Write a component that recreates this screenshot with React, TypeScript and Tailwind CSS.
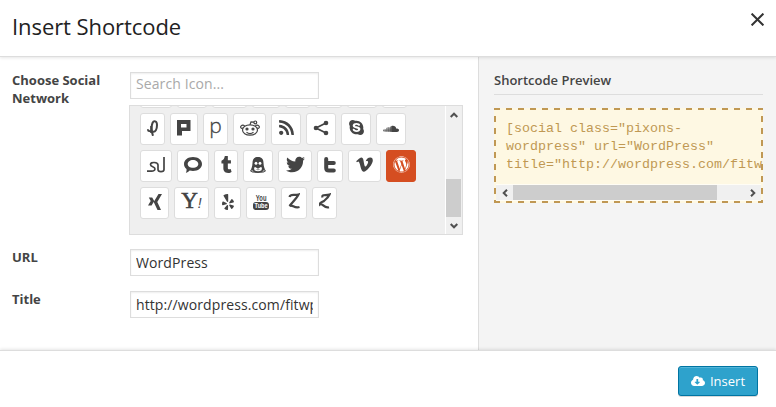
import React from 'react';
import {
  FaRss, FaSkype, FaSoundcloud, FaTumblr, FaTwitter, FaVimeoV,
  FaWordpress, FaYelp, FaCloudDownloadAlt,
} from 'react-icons/fa';

type TileDef = { w: string; icon: React.ReactNode; active?: boolean };

const stroke = { fill: 'none', stroke: 'currentColor' } as const;

const Path = () => (
  <svg width="12" height="16" viewBox="0 0 12 16" {...stroke} strokeWidth="2">
    <path d="M6 15.800C4.500 12 4.200 6 5.500 3C6.800 .2 10 .8 10 5C10 9.500 8.500 12.300 5.500 11.500C3.500 11 .6 12 1.200 9.200" />
    <path d="M4.200 6V13" />
  </svg>
);
const Plurk = () => (
  <svg width="14" height="16" viewBox="0 0 14 16" fill="currentColor">
    <path d="M0 0H13.500V11H9.500V11H5V15.500H0ZM4 4V7.500H9.500V4Z" fillRule="evenodd" />
  </svg>
);
const Reddit = () => (
  <svg width="20" height="16" viewBox="0 0 20 16" {...stroke} strokeWidth="1.2">
    <ellipse cx="10" cy="10" rx="7.5" ry="5.2" />
    <path d="M3 8C1 9 0 7 1.200 5.800C2.400 4.600 4 5 4.600 6M17 8C19 9 20 7 18.800 5.800C17.600 4.600 16 5 15.400 6M10 4.800L11 1.800L14 2.200M6.500 12.300C8.500 13.800 11.500 13.800 13.500 12.300" />
    <circle cx="15.3" cy="2.4" r="1.4" />
    <circle cx="7" cy="9" r="1" fill="currentColor" />
    <circle cx="13" cy="9" r="1" fill="currentColor" />
  </svg>
);
const Share = () => (
  <svg width="16" height="16" viewBox="0 0 16 16" fill="currentColor">
    <path d="M13 3L3 8L13 13" fill="none" stroke="currentColor" strokeWidth="1.800" />
    <circle cx="13" cy="3" r="2.300" />
    <circle cx="3" cy="8" r="2.300" />
    <circle cx="13" cy="13" r="2.300" />
  </svg>
);
const Stumble = () => (
  <svg width="18" height="16" viewBox="0 0 18 16" {...stroke} strokeWidth="1.7">
    <path d="M17 0V12.500C17 15.200 11 15.200 11 12.500V8C11 5 3.500 4.500 3.500 7.500C3.500 10.500 8 9 8 12C8 14.600 4 14.200 0 14.200" />
  </svg>
);
const Bubble = () => (
  <svg width="18" height="16" viewBox="0 0 18 16" fill="currentColor">
    <path d="M9 0C14 0 18 2.800 18 7C18 11.200 14 14 9 14C7.800 14 6.700 13.900 5.700 13.600C4.700 14.800 3.300 15.700 1.800 15.900C2.500 14.700 2.700 13.500 2.500 12C.9 10.800 0 9 0 7C0 2.800 4 0 9 0ZM9 3C6 3 3.700 4.700 3.700 7C3.700 9.300 6 10.800 9 10.800C12 10.800 14.300 9.300 14.300 7C14.300 4.700 12 3 9 3Z" fillRule="evenodd" />
  </svg>
);
const Tux = () => (
  <svg width="16" height="16" viewBox="0 0 16 16">
    <path fill="currentColor" d="M8 0C12 0 13.500 2.500 13.500 6C13.700 9.500 14.500 12 16 14L13.500 15.500L8 16L2.500 15.500L0 14C1.500 12 2.300 9.500 2.500 6C2.500 2.500 4 0 8 0Z" />
    <ellipse cx="6" cy="6.200" rx="1.400" ry="1.500" fill="#fff" />
    <ellipse cx="10" cy="6.200" rx="1.400" ry="1.500" fill="#fff" />
    <path d="M4 10.800C6 9.500 10 9.500 12 10.800L11.500 13.300C9.500 14.500 6.500 14.500 4.500 13.300Z" fill="#fff" />
    <path d="M4.500 9.500L8 8L11.500 9.500L8 11.800ZM5.500 12.600L8 13.200L10.500 12.600" fill="currentColor" />
    <path d="M1.500 13.300L3.300 14.500M14.500 13.300L12.700 14.500" stroke="#fff" strokeWidth=".8" />
  </svg>
);
const TwitterT = () => (
  <svg width="12" height="16" viewBox="0 0 12 16" {...stroke} strokeWidth="4" strokeLinecap="round" strokeLinejoin="round">
    <path d="M2.200 2V11C2.200 13 3.300 13.600 5 13.600H9.800M2.500 6H9.800" />
  </svg>
);
const Xing = () => (
  <svg width="14" height="16" viewBox="0 0 14 16" fill="currentColor">
    <path d="M10.500 0H14L9.300 8L13 16H9.500L5.700 8ZM.8 3.500H4.200L6.200 7L3.600 11.500H0L2.700 7Z" />
  </svg>
);
const Yahoo = () => (
  <span className="flex items-baseline font-['Liberation_Serif',serif] text-[23px] leading-4">
    <span className="[-webkit-text-stroke:0.6px_#444]">Y</span>
    <span className="font-['Liberation_Sans',sans-serif] text-[14px] italic">!</span>
  </span>
);
const YouTube = () => (
  <span className="flex w-[20px] flex-col items-center font-['Liberation_Sans',sans-serif] text-[9px] leading-[8px] font-bold">
    <span className="scale-x-[.65]">You</span>
    <span className="flex h-[8px] w-[16px] items-center justify-center rounded-[3px] bg-[#444] text-[7px] text-white">
      <span className="scale-x-[.8]">Tube</span>
    </span>
  </span>
);
const Zerply = () => (
  <svg width="12" height="17" viewBox="0 0 12 17" {...stroke} strokeWidth="2.200">
    <path d="M1.500 4C2.500 .5 6 2.800 10.500 1.500C8.500 5.500 4.500 9 1.500 13C4.500 11 6 15.800 11.500 14" />
  </svg>
);
const Zootool = () => (
  <svg width="12" height="17" viewBox="0 0 12 17" {...stroke} strokeWidth="2.200">
    <path d="M3.500 4.500C2.500 .8 6.500 2.800 10.500 1.500C9.500 4 7.500 6 5 8C3 9.500 .5 9 1 11.500C3.500 9.500 5 15.800 10 14.200" />
  </svg>
);

const rows: TileDef[][] = [
  [
    { w: 'w-[32px]', icon: null },
    { w: 'w-[30px]', icon: null },
    { w: 'w-[35px]', icon: null },
    { w: 'w-[28px]', icon: null },
    { w: 'w-[25px]', icon: null },
    { w: 'w-[27px]', icon: null },
    { w: 'w-[30px]', icon: null },
    { w: 'w-[25px]', icon: null },
  ],
  [
    { w: 'w-[25px]', icon: <Path /> },
    { w: 'w-[28px]', icon: <Plurk /> },
    { w: 'w-[25px]', icon: <span className="-translate-y-[3px] font-['Open_Sans',sans-serif] text-[21px] leading-4 font-light [-webkit-text-stroke:0.3px_#444]">p</span> },
    { w: 'w-[33px]', icon: <Reddit /> },
    { w: 'w-[30px]', icon: <FaRss size={17} /> },
    { w: 'w-[30px]', icon: <Share /> },
    { w: 'w-[30px]', icon: <FaSkype size={17} /> },
    { w: 'w-[30px]', icon: <FaSoundcloud className="translate-y-px scale-y-90" size={16} /> },
  ],
  [
    { w: 'w-[32px]', icon: <Stumble /> },
    { w: 'w-[32px]', icon: <Bubble /> },
    { w: 'w-[24px]', icon: <FaTumblr size={17} /> },
    { w: 'w-[30px]', icon: <Tux /> },
    { w: 'w-[34px]', icon: <FaTwitter size={19} /> },
    { w: 'w-[26px]', icon: <TwitterT /> },
    { w: 'w-[33px]', icon: <FaVimeoV size={19} /> },
    { w: 'w-[30px]', icon: <FaWordpress size={17} />, active: true },
  ],
  [
    { w: 'w-[29px]', icon: <Xing /> },
    { w: 'w-[35px]', icon: <Yahoo /> },
    { w: 'w-[27px]', icon: <FaYelp size={16} /> },
    { w: 'w-[30px]', icon: <YouTube /> },
    { w: 'w-[26px]', icon: <Zerply /> },
    { w: 'w-[25px]', icon: <Zootool /> },
  ],
];

const Tile = ({ w, icon, active }: TileDef) => (
  <button
    className={`${w} flex h-8 shrink-0 items-center justify-center rounded-[3px] border pb-[3px] ${
      active ? 'border-[#d54e21] bg-[#d54e21] text-white' : 'border-[#ddd] bg-white text-[#444]'
    }`}
  >
    {icon}
  </button>
);

const Chevron = ({ turn }: { turn: string }) => (
  <svg className={turn} width="8" height="6" viewBox="0 0 8 6" fill="none" stroke="#505050" strokeWidth="2">
    <path d="M.7 5L4 1.700L7.300 5" />
  </svg>
);

const label = '-mt-px shrink-0 text-[13px] leading-[18px] font-bold text-[#444]';
const input =
  "block h-[27px] w-[189px] border border-[#ddd] bg-white px-[5px] text-[14px] text-[#333] shadow-[inset_0_1px_2px_rgba(0,0,0,0.07)] outline-none placeholder:text-[#a9a9a9]";

export default function App() {
  return (
    <div className="flex h-[407px] w-[776px] flex-col overflow-hidden bg-white font-['Open_Sans',sans-serif]">
      <header className="z-10 flex h-[57px] shrink-0 justify-between border-b border-[#ddd] bg-white pr-3 pl-3 shadow-[0_1px_3px_rgba(0,0,0,0.1)]">
        <h1 className="pt-2.5 text-[22px] leading-8 tracking-[-0.07px] text-[#222]">Insert Shortcode</h1>
        <svg className="mt-[13px]" width="13" height="13" viewBox="0 0 13 13" stroke="#333" strokeWidth="2">
          <path d="M.6 .6L12.400 12.400M12.400 .6L.6 12.400" />
        </svg>
      </header>

      <main className="flex h-[293px] shrink-0">
        <section className="w-[478px] pl-3 pt-[15px]">
          <div className="flex">
            <div className={`${label} w-[117px] pr-5`}>Choose Social Network</div>
            <div>
              <input className={`${input} ml-px pb-[5px] tracking-[0.1px]`} placeholder="Search Icon..." />
              <div className="mt-1.5 flex h-[130px] w-[334px] justify-between overflow-hidden border border-[#ddd] bg-[#efefef] pr-px">
                <div className="-mt-[30px] flex flex-col gap-[5px] pl-2.5">
                  {rows.map((row, i) => (
                    <div key={i} className="flex gap-[5px]">
                      {row.map((t, j) => (
                        <Tile key={j} {...t} />
                      ))}
                    </div>
                  ))}
                </div>
                <div className="flex w-4 flex-col items-center border-l border-white bg-[#f0f0f0]">
                  <div className="flex h-[17px] items-center"><Chevron turn="" /></div>
                  <div className="mt-14 h-[38px] w-[15px] bg-[#cdcdcd]" />
                  <div className="flex h-[17px] items-center"><Chevron turn="rotate-180" /></div>
                </div>
              </div>
            </div>
          </div>
          <div className="mt-3.5 flex">
            <div className={`${label} w-[118px]`}>URL</div>
            <input className={`${input} tracking-[0.1px]`} defaultValue="WordPress" />
          </div>
          <div className="mt-[15px] flex">
            <div className={`${label} w-[118px]`}>Title</div>
            <input className={`${input} tracking-[0.1px]`} defaultValue="http://wordpress.com/fitwp" />
          </div>
        </section>

        <aside className="w-[298px] border-l border-[#ddd] bg-[#f4f4f4] pt-3.5 pl-[15px]">
          <h2 className="h-6 w-[269px] border-b border-[#ddd] text-[13px] leading-[18px] font-semibold text-[#444]">
            Shortcode Preview
          </h2>
          <div className="mt-[13px] flex h-[95px] w-[269px] flex-col bg-[#fef8e3] bg-[repeating-linear-gradient(90deg,#c09853_0_6px,transparent_6px_12px),repeating-linear-gradient(90deg,#c09853_0_6px,transparent_6px_12px),repeating-linear-gradient(180deg,#c09853_0_2px,transparent_2px_8px,#c09853_8px_12px),repeating-linear-gradient(180deg,#c09853_0_2px,transparent_2px_8px,#c09853_8px_12px)] bg-[length:100%_2px,100%_2px,2px_100%,2px_100%] bg-[position:0_0,0_100%,0_0,100%_0] bg-no-repeat p-0.5">
            <pre className="h-[74px] pt-[10px] pl-[10px] font-['Liberation_Mono',monospace] text-[13.33px] leading-[18px] text-[#c09853]">
              {'[social class="pixons-\nwordpress" url="WordPress"\ntitle="http://wordpress.com/fitw'}
            </pre>
            <div className="flex h-[17px] items-center border-y border-[#fffdf5] bg-[#f0f0f0]">
              <div className="flex w-[17px] justify-center"><Chevron turn="-rotate-90" /></div>
              <div className="h-[15px] w-[204px] bg-[#cdcdcd]" />
              <div className="ml-auto flex w-[17px] justify-center"><Chevron turn="rotate-90" /></div>
            </div>
          </div>
        </aside>
      </main>

      <footer className="z-10 flex h-[57px] shrink-0 justify-end border-t border-[#ddd] bg-white pt-[15px] pr-[18px] shadow-[0_-1px_3px_rgba(0,0,0,0.1)]">
        <button className="flex h-[30px] w-20 items-center justify-center gap-[5px] rounded-[3px] border border-[#0074a2] bg-[#2ea2cc] text-[13px] text-white shadow-[inset_0_1px_0_rgba(120,200,230,0.5),0_1px_0_rgba(0,0,0,0.15)]">
          <FaCloudDownloadAlt size={14} />
          <span className="translate-y-px">Insert</span>
        </button>
      </footer>
    </div>
  );
}
